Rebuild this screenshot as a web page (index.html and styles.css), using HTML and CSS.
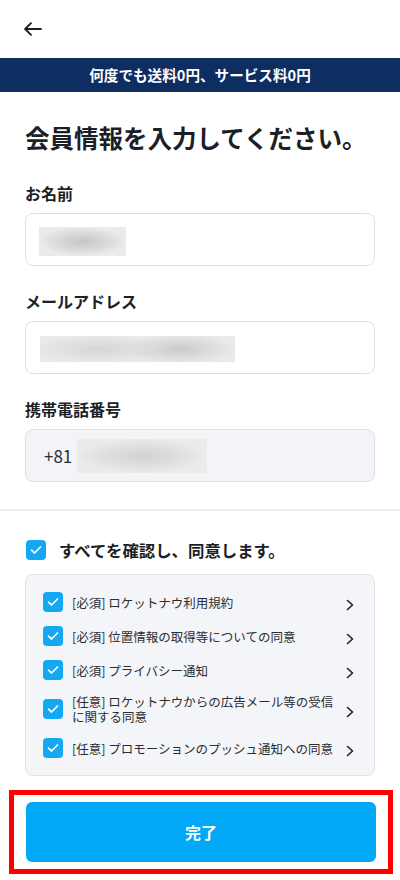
FILE: index.html
```html
<!DOCTYPE html>
<html lang="ja">
<head>
    <meta charset="UTF-8">
    <title>会員情報の入力</title>
    <link rel="stylesheet" href="styles.css">
</head>
<body>
    <header class="topbar">
        <button type="button" class="back-btn" aria-label="戻る">
            <svg width="18" height="14" viewBox="0 0 18 14" fill="none" stroke="#1c1f26" stroke-width="1.9" stroke-linecap="round" stroke-linejoin="round">
                <path d="M17 7H1.5"/>
                <path d="M7 1.2L1.2 7L7 12.8"/>
            </svg>
        </button>
    </header>
    <div class="promo-banner">何度でも送料0円、サービス料0円</div>

    <main class="form-wrap">
        <h1 class="page-title">会員情報を入力してください。</h1>

        <div class="field">
            <label class="field-label">お名前</label>
            <div class="input-box">
                <span class="blur blur-name"></span>
            </div>
        </div>
        <div class="field">
            <label class="field-label">メールアドレス</label>
            <div class="input-box">
                <span class="blur blur-mail"></span>
            </div>
        </div>
        <div class="field">
            <label class="field-label">携帯電話番号</label>
            <div class="input-box input-box--disabled">
                <span class="phone-code">+81</span>
                <span class="blur blur-phone"></span>
            </div>
        </div>
    </main>

    <section class="agree">
        <div class="agree-inner">
            <div class="agree-all">
                <span class="check">
                    <svg width="12" height="10" viewBox="0 0 12 10" fill="none" stroke="#fff" stroke-width="1.7" stroke-linecap="round" stroke-linejoin="round"><path d="M1.5 5.2L4.6 8L10.5 2"/></svg>
                </span>
                <span class="agree-all-text">すべてを確認し、同意します。</span>
            </div>

            <ul class="terms-list">
                <li class="term">
                    <span class="check">
                        <svg width="12" height="10" viewBox="0 0 12 10" fill="none" stroke="#fff" stroke-width="1.7" stroke-linecap="round" stroke-linejoin="round"><path d="M1.5 5.2L4.6 8L10.5 2"/></svg>
                    </span>
                    <span class="term-text">[必須] ロケットナウ利用規約</span>
                    <svg class="chevron" width="8" height="12" viewBox="0 0 8 12" fill="none" stroke="#1c1f26" stroke-width="1.6" stroke-linecap="round" stroke-linejoin="round"><path d="M1.5 1.5L6.5 6L1.5 10.5"/></svg>
                </li>
                <li class="term">
                    <span class="check">
                        <svg width="12" height="10" viewBox="0 0 12 10" fill="none" stroke="#fff" stroke-width="1.7" stroke-linecap="round" stroke-linejoin="round"><path d="M1.5 5.2L4.6 8L10.5 2"/></svg>
                    </span>
                    <span class="term-text">[必須] 位置情報の取得等についての同意</span>
                    <svg class="chevron" width="8" height="12" viewBox="0 0 8 12" fill="none" stroke="#1c1f26" stroke-width="1.6" stroke-linecap="round" stroke-linejoin="round"><path d="M1.5 1.5L6.5 6L1.5 10.5"/></svg>
                </li>
                <li class="term">
                    <span class="check">
                        <svg width="12" height="10" viewBox="0 0 12 10" fill="none" stroke="#fff" stroke-width="1.7" stroke-linecap="round" stroke-linejoin="round"><path d="M1.5 5.2L4.6 8L10.5 2"/></svg>
                    </span>
                    <span class="term-text">[必須] プライバシー通知</span>
                    <svg class="chevron" width="8" height="12" viewBox="0 0 8 12" fill="none" stroke="#1c1f26" stroke-width="1.6" stroke-linecap="round" stroke-linejoin="round"><path d="M1.5 1.5L6.5 6L1.5 10.5"/></svg>
                </li>
                <li class="term">
                    <span class="check">
                        <svg width="12" height="10" viewBox="0 0 12 10" fill="none" stroke="#fff" stroke-width="1.7" stroke-linecap="round" stroke-linejoin="round"><path d="M1.5 5.2L4.6 8L10.5 2"/></svg>
                    </span>
                    <span class="term-text">[任意] ロケットナウからの広告メール等の受信に関する同意</span>
                    <svg class="chevron" width="8" height="12" viewBox="0 0 8 12" fill="none" stroke="#1c1f26" stroke-width="1.6" stroke-linecap="round" stroke-linejoin="round"><path d="M1.5 1.5L6.5 6L1.5 10.5"/></svg>
                </li>
                <li class="term">
                    <span class="check">
                        <svg width="12" height="10" viewBox="0 0 12 10" fill="none" stroke="#fff" stroke-width="1.7" stroke-linecap="round" stroke-linejoin="round"><path d="M1.5 5.2L4.6 8L10.5 2"/></svg>
                    </span>
                    <span class="term-text">[任意] プロモーションのプッシュ通知への同意</span>
                    <svg class="chevron" width="8" height="12" viewBox="0 0 8 12" fill="none" stroke="#1c1f26" stroke-width="1.6" stroke-linecap="round" stroke-linejoin="round"><path d="M1.5 1.5L6.5 6L1.5 10.5"/></svg>
                </li>
            </ul>
        </div>

        <div class="submit-frame">
            <button type="button" class="submit-btn">完了</button>
        </div>
    </section>
</body>
</html>
```

FILE: styles.css
```css
* {
    box-sizing: border-box;
}
body {
    margin: 0;
    width: 400px;
    font-family: "Noto Sans CJK JP", "Noto Sans", sans-serif;
    color: #1c1f26;
    background-color: #ffffff;
}
.topbar {
    height: 58px;
    display: flex;
    align-items: center;
    padding-left: 24px;
}
.back-btn {
    display: flex;
    padding: 0;
    border: none;
    background: none;
    cursor: pointer;
}
.promo-banner {
    height: 34px;
    line-height: 34px;
    background-color: #0e2d61;
    color: #ffffff;
    font-size: 14.6px;
    font-weight: 700;
    text-align: center;
}
.form-wrap {
    padding: 0 25px 27px;
}
.page-title {
    margin: 29px 0 0;
    font-size: 24.5px;
    line-height: 34px;
    font-weight: 700;
    letter-spacing: 0;
}
.field {
    margin-top: 24px;
}
.field:first-of-type {
    margin-top: 27px;
}
.field-label {
    display: block;
    font-size: 16px;
    line-height: 22px;
    font-weight: 700;
    margin-bottom: 9px;
}
.input-box {
    height: 53px;
    display: flex;
    align-items: center;
    padding-left: 13px;
    border: 1px solid #dcdfe6;
    border-radius: 8px;
    background-color: #ffffff;
}
.input-box--disabled {
    background-color: #f3f4f7;
    padding-left: 18px;
}
.phone-code {
    font-size: 17px;
    color: #2b2e35;
    margin-right: 5px;
}
.blur {
    display: block;
    margin-top: 3px;
}
.blur-name {
    width: 87px;
    height: 29px;
    background: radial-gradient(closest-side, #c6c6c6, #dedede 70%, #ebebeb);
}
.blur-mail {
    width: 195px;
    height: 26px;
    margin-left: 1px;
    background:
        radial-gradient(ellipse 28% 60% at 72% 50%, #cbcbcb, rgba(235, 235, 235, 0)),
        radial-gradient(ellipse 35% 55% at 30% 50%, #d5d5d5, rgba(235, 235, 235, 0)),
        #eaeaea;
}
.blur-phone {
    width: 130px;
    height: 34px;
    margin-top: 1px;
    background: radial-gradient(closest-side, #d2d2d2, #e2e2e2 70%, #ebebeb);
}
.agree {
    border-top: 2px solid #eceef2;
    padding-top: 29px;
}
.agree-inner {
    padding: 0 25px;
}
.agree-all {
    display: flex;
    align-items: center;
    margin-left: 1px;
}
.check {
    flex: none;
    width: 20px;
    height: 20px;
    border-radius: 4px;
    background-color: #14a7f2;
    display: flex;
    align-items: center;
    justify-content: center;
}
.agree-all-text {
    margin-left: 13px;
    font-size: 16.4px;
    line-height: 20px;
    font-weight: 700;
}
.terms-list {
    list-style: none;
    margin: 14px 0 0;
    padding: 10px 20px 10px 17px;
    background-color: #f4f5f8;
    border: 1px solid #e0e3e9;
    border-radius: 8px;
}
.term {
    display: flex;
    align-items: center;
    padding: 7px 0;
}
.term-text {
    flex: 1;
    margin: 0 12px 0 9px;
    font-size: 12.5px;
    line-height: 15px;
    color: #2a2d34;
}
.chevron {
    flex: none;
    margin-top: 5px;
}
.submit-frame {
    margin: 14px 7px 0 9px;
    padding: 7px 12px;
    border: 5px solid #ff0000;
}
.submit-btn {
    display: block;
    width: 100%;
    height: 60px;
    border: none;
    border-radius: 6px;
    background-color: #03a8f6;
    color: #ffffff;
    font-family: inherit;
    font-size: 16px;
    font-weight: 700;
    cursor: pointer;
}
```
